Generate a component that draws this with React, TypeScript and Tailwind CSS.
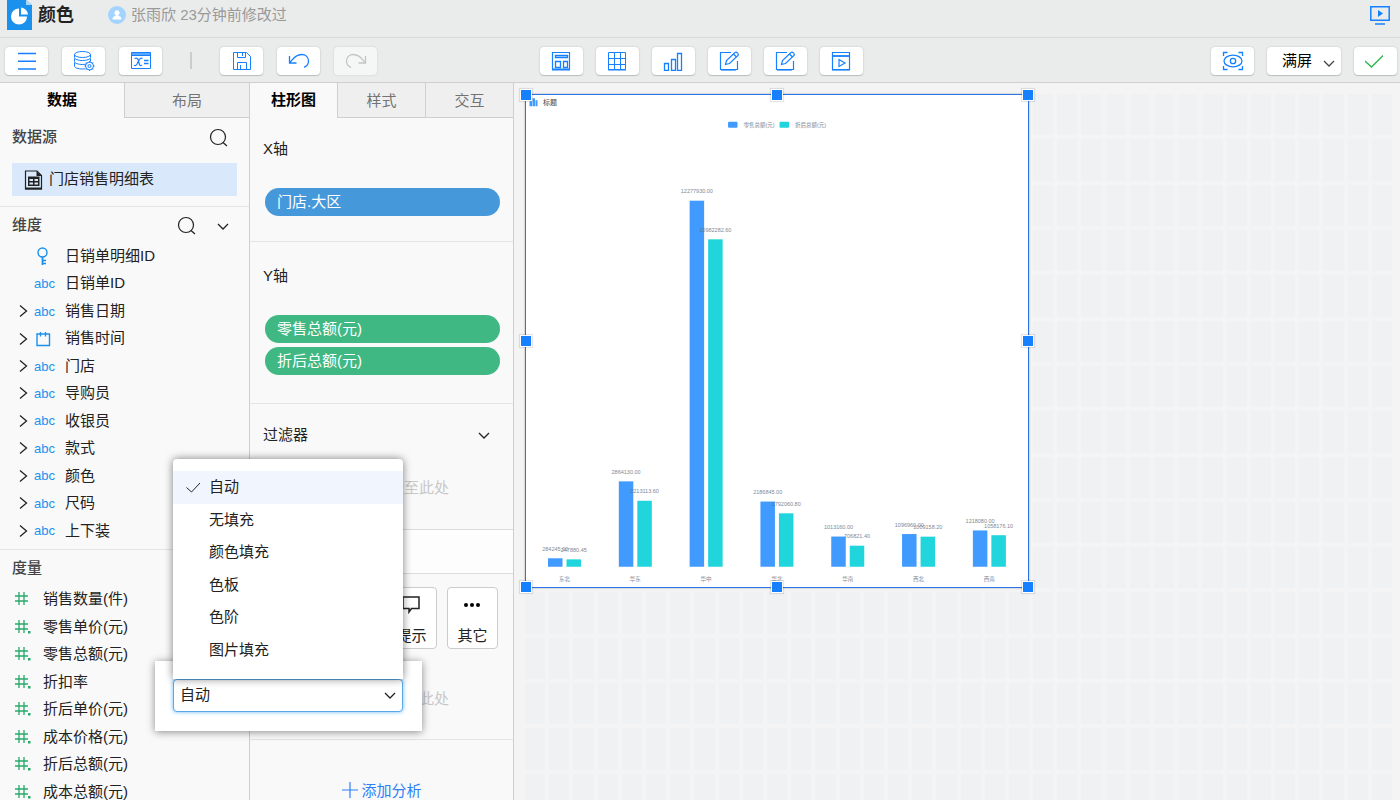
import type { ReactNode } from 'react'
import { useState } from 'react'

type FieldKind = 'key' | 'text' | 'date'

const dimensions: { name: string; kind: FieldKind; expandable: boolean }[] = [
  { name: '日销单明细ID', kind: 'key', expandable: false },
  { name: '日销单ID', kind: 'text', expandable: false },
  { name: '销售日期', kind: 'text', expandable: true },
  { name: '销售时间', kind: 'date', expandable: true },
  { name: '门店', kind: 'text', expandable: true },
  { name: '导购员', kind: 'text', expandable: true },
  { name: '收银员', kind: 'text', expandable: true },
  { name: '款式', kind: 'text', expandable: true },
  { name: '颜色', kind: 'text', expandable: true },
  { name: '尺码', kind: 'text', expandable: true },
  { name: '上下装', kind: 'text', expandable: true },
]

const measures = [
  { name: '销售数量(件)', decimal: false },
  { name: '零售单价(元)', decimal: true },
  { name: '零售总额(元)', decimal: true },
  { name: '折扣率', decimal: true },
  { name: '折后单价(元)', decimal: true },
  { name: '成本价格(元)', decimal: true },
  { name: '折后总额(元)', decimal: true },
  { name: '成本总额(元)', decimal: true },
]

const fillOptions = ['自动', '无填充', '颜色填充', '色板', '色阶', '图片填充']

const regions = [
  { name: '东北', retail: 284245, discounted: 247880.45 },
  { name: '华东', retail: 2864130, discounted: 2213113.6 },
  { name: '华中', retail: 12277930, discounted: 10982282.6 },
  { name: '华北', retail: 2186845, discounted: 1792060.8 },
  { name: '华南', retail: 1013160, discounted: 706821.4 },
  { name: '西北', retail: 1096960, discounted: 1009158.2 },
  { name: '西南', retail: 1218080, discounted: 1058176.1 },
]

/* ---------- icons ---------- */

function Icon({ size = 20, sw = 1, className, children }: { size?: number; sw?: number; className?: string; children: ReactNode }) {
  return (
    <svg
      width={size}
      height={size}
      viewBox={`0 0 ${size} ${size}`}
      fill="none"
      stroke="currentColor"
      strokeWidth={sw}
      className={className}
      aria-hidden="true"
    >
      {children}
    </svg>
  )
}

const MenuIcon = () => (
  <Icon sw={1.4}>
    <path d="M1 2.500h18M1 10.300h18M1 18h18" />
  </Icon>
)

const DatabaseIcon = () => (
  <Icon size={22}>
    <ellipse cx="9.500" cy="4.500" rx="8" ry="3" />
    <path d="M1.500 4.500v3c0 1.700 3.600 3 8 3s8-1.300 8-3v-3M1.500 8.500v3c0 1.700 3.600 3 8 3 1.200 0 2.300-.1 3.300-.3M17.500 8.500v3M1.500 12.500v3.500c0 1.700 3.600 3 8 3 1 0 2-.1 2.800-.2" />
    <circle cx="16.500" cy="16" r="4" />
    <circle cx="16.500" cy="16" r="1.500" />
    <path d="M16.500 11v1.500M16.500 19.500V21M11.500 16H13M20 16h1.500M13 12.500l1 1M19 18.500l1 1M20 12.500l-1 1M14 18.500l-1 1" />
  </Icon>
)

const FormulaIcon = () => (
  <Icon size={22}>
    <path d="M1.500 2.500h19v16h-19z M1.500 5.500h19" />
    <path d="M1.500 4h19" strokeWidth="2" opacity=".7" />
    <path d="M4.500 8.500c2.500-1 3.500 0 4 2.500l.8 3c.4 1.800 1.200 2 2.700 1M12.500 8.500c-2-1-3 .5-4 2.500l-1.500 3c-.8 1.500-1.600 2-3 1.200" strokeWidth="1.200" />
    <path d="M14 10.500h4.500M14 13.500h4.500" strokeWidth="1.500" />
  </Icon>
)

const SaveIcon = () => (
  <Icon>
    <path d="M1.500 1.500h13l4 4v13h-17z M5.500 1.500v5h8v-5 M5.500 18.500v-7h9v7 M8.500 14v4.500 M10.500 2v3" />
  </Icon>
)

const UndoIcon = ({ flip = false }: { flip?: boolean }) => (
  <Icon size={22} sw={1.3} className={flip ? '-scale-x-100' : ''}>
    <path d="M1.500 6v7h7M1.500 13c2.500-2.500 5-8.500 12-8.500 4.500 0 7 3 7 6.500 0 3.200-2 5.300-4.500 6.300" />
  </Icon>
)

const LayoutIcon = () => (
  <Icon>
    <path d="M1.500 1.500h17v17h-17z" strokeWidth="1.200" />
    <path d="M1 18.500h18" strokeWidth="2" />
    <path d="M4.500 4.500h12v2h-12z M4.500 10.500h5v6h-5z M12.500 10.500h4v6h-4z" strokeWidth="1.300" />
  </Icon>
)

const TableIcon = () => (
  <Icon>
    <path d="M1.500 1.500h17v17h-17z M7.500 1.500v17 M13.500 1.500v17 M1.500 7.500h17 M1.500 13.500h17" />
    <path d="M1 19h18" />
  </Icon>
)

const BarsIcon = () => (
  <Icon sw={1.3}>
    <path d="M1.500 12.500h4v7h-4z M8.500 8.500h4v11h-4z M14.500 2.500h4v17h-4z" />
  </Icon>
)

const EditIcon = () => (
  <Icon sw={1.2}>
    <path d="M12 1.500H1.500v17h17V10" />
    <path d="M2 19h15" />
    <path d="M6.500 13.500l1-4 8.500-8c1.500-1 4 1 3 3l-8.500 8z M14.500 3l3 3" />
  </Icon>
)

const MediaIcon = () => (
  <Icon sw={1.2}>
    <path d="M1.500 1.500h17v17h-17z" />
    <path d="M1 5h18" strokeWidth="1.800" />
    <path d="M1 19h18" />
    <path d="M8 8.500l6 3.500-6 3.500z" />
  </Icon>
)

const PreviewIcon = () => (
  <Icon size={22} sw={1.3}>
    <path d="M1.500 6V2.500H5.500M16.500 2.500h4V6M20.500 16v3.500h-4M5.500 19.500h-4V16" />
    <ellipse cx="11" cy="11" rx="9" ry="5.800" />
    <circle cx="11" cy="11" r="2.700" />
  </Icon>
)

const PresentIcon = () => (
  <Icon size={22} className="text-[#1680ff]">
    <path d="M1.800 2.800h18.400v13.400H1.800z" strokeWidth="1.500" />
    <path d="M6 20h10" strokeWidth="1.500" />
    <path d="M9 6l5 3.500L9 13z" fill="currentColor" stroke="none" />
  </Icon>
)

const SearchIcon = () => (
  <Icon sw={1.2} className="text-[#222]">
    <circle cx="9" cy="9" r="7.500" />
    <path d="M14 14.500l4 3.500" />
  </Icon>
)

const ChevronIcon = ({ className = '' }: { className?: string }) => (
  <Icon size={12} sw={1.3} className={className}>
    <path d="M1 4l5 5 5-5" />
  </Icon>
)

const ExpandIcon = () => (
  <Icon size={14} sw={1.3}>
    <path d="M3 1.500l6.500 5.500L3 12.500" />
  </Icon>
)

function FieldIcon({ kind }: { kind: FieldKind }) {
  if (kind === 'text') return <span className="text-[13px] leading-none">abc</span>
  if (kind === 'key') {
    return (
      <Icon size={18} sw={1.4}>
        <circle cx="8.500" cy="5.500" r="4.500" />
        <path d="M8.500 10v8" strokeWidth="1.800" />
        <path d="M9 13.500h3M9 16.500h3" strokeWidth="1.400" />
      </Icon>
    )
  }
  return (
    <Icon size={18} sw={1.4}>
      <path d="M3 4h12.500v11.500h-12.500z M6.500 2v4.500M11.500 2v4.500" />
    </Icon>
  )
}

/* ---------- small parts ---------- */

function ToolButton({ label, disabled, children }: { label: string; disabled?: boolean; children: ReactNode }) {
  return (
    <button
      type="button"
      aria-label={label}
      disabled={disabled}
      className="flex h-7 w-[43px] items-center justify-center rounded bg-white text-[#1680ff] shadow-[0_0_2px_rgba(0,0,0,0.2),0_1px_1px_rgba(0,0,0,0.15)] disabled:bg-[#f5f6f6] disabled:text-[#c4c4c4] disabled:shadow-[0_0_2px_rgba(0,0,0,0.15)]"
    >
      {children}
    </button>
  )
}

function Tabs({ items }: { items: string[] }) {
  return (
    <div role="tablist" className="flex h-[35px]">
      {items.map((item, i) => (
        <button
          key={item}
          type="button"
          role="tab"
          aria-selected={i === 0}
          className={
            i === 0
              ? 'flex-1 font-bold text-black'
              : 'flex-1 border-b border-l border-[#cfcfcf] bg-[#efefef] pt-0.5 text-[#737373]'
          }
        >
          {item}
        </button>
      ))}
    </div>
  )
}

const Pill = ({ className, children }: { className: string; children: ReactNode }) => (
  <div className={`flex h-7 items-center rounded-full px-3 text-white ${className}`}>{children}</div>
)

const Handle = ({ className }: { className: string }) => (
  <span className={`absolute size-3 border border-white bg-[#1680ff] shadow-[0_0_1px_1px_rgba(0,0,0,0.1)] ${className}`} />
)

/* ---------- chart ---------- */

const BASE = 943
const MAX_HEIGHT = 732
const MAX_VALUE = 12277930

function BarChart() {
  const series = [
    { key: 'retail' as const, label: '零售总额(元)', color: '#419bff', x: 404 },
    { key: 'discounted' as const, label: '折后总额(元)', color: '#20d5dc', x: 507 },
  ]
  return (
    <svg viewBox="0 0 1004 984" className="block h-full w-full" fontSize="11" fill="#5f6b7a">
      <path d="M7 12h5v10H7z M13 6h5v16h-5z M19 10h4v12h-4z" fill="#419bff" />
      <text x="34" y="20" fontSize="14" fill="#444">标题</text>
      {series.map((s, n) => (
        <g key={s.key}>
          <rect x={s.x} y="53" width="19" height="12" rx="2" fill={s.color} />
          <text x={s.x + 31} y="63" opacity=".8">{s.label}</text>
          {regions.map((r, i) => {
            const h = (r[s.key] / MAX_VALUE) * MAX_HEIGHT
            const x = 44 + i * 141.6 + n * 37
            return <rect key={r.name} x={x} y={BASE - h} width="29" height={h} fill={s.color} />
          })}
        </g>
      ))}
      {regions.map((r, i) => (
        <g key={r.name} textAnchor="middle" opacity=".8">
          {series.map((s, n) => (
            <text key={s.key} x={58.5 + i * 141.6 + n * 37} y={BASE - (r[s.key] / MAX_VALUE) * MAX_HEIGHT - 15}>
              {r[s.key].toFixed(2)}
            </text>
          ))}
          <text x={77 + i * 141.6} y="972">{r.name}</text>
        </g>
      ))}
    </svg>
  )
}

/* ---------- page ---------- */

function Header() {
  return (
    <header className="flex h-[38px] shrink-0 items-start justify-between border-b border-[#d9dbdb] pr-[9px] pl-[7px]">
      <div className="flex items-start">
        <svg width="25" height="30" viewBox="0 0 25 30" aria-hidden="true">
          <path d="M0 0h19l6 5v25H0z" fill="#1b91ee" />
          <path d="M19 0v5h6z" fill="#a9d8fb" />
          <path d="M12 8.500v8h8a8 8 0 1 1-8-8z" fill="#fff" />
          <path d="M14 7.500a7.500 7.500 0 0 1 7 7h-7z" fill="#fff" />
        </svg>
        <h1 className="ml-1.5 h-[30px] text-lg leading-[30px] font-bold text-[#222]">颜色</h1>
        <svg width="18" height="18" viewBox="0 0 18 18" className="mt-1.5 ml-[34px]" aria-hidden="true">
          <circle cx="9" cy="9" r="9" fill="#a3d4ff" />
          <path d="M9 4.300a2.600 2.600 0 0 1 1.400 4.800v1c1.500.4 3 .8 3 2.600v.8H4.600v-.8c0-1.800 1.500-2.200 3-2.600v-1A2.600 2.600 0 0 1 9 4.300z" fill="#fff" />
        </svg>
        <span className="ml-[5px] leading-[30px] text-[#999]">张雨欣 23分钟前修改过</span>
      </div>
      <button type="button" aria-label="播放" className="mt-1">
        <PresentIcon />
      </button>
    </header>
  )
}

function Toolbar() {
  return (
    <div className="grid h-[45px] shrink-0 grid-cols-[1fr_auto_1fr] items-center border-b border-[#cfcfcf] pt-px pr-[3px] pl-[5px]">
      <div className="flex items-center gap-3.5">
        <ToolButton label="菜单"><MenuIcon /></ToolButton>
        <ToolButton label="数据源"><DatabaseIcon /></ToolButton>
        <ToolButton label="公式"><FormulaIcon /></ToolButton>
        <span className="mx-3.5 h-[17px] w-0.5 bg-[#ccc]" />
        <ToolButton label="保存"><SaveIcon /></ToolButton>
        <ToolButton label="撤销"><UndoIcon /></ToolButton>
        <ToolButton label="重做" disabled><UndoIcon flip /></ToolButton>
      </div>
      <div className="flex gap-[13px]">
        <ToolButton label="布局"><LayoutIcon /></ToolButton>
        <ToolButton label="表格"><TableIcon /></ToolButton>
        <ToolButton label="图表"><BarsIcon /></ToolButton>
        <ToolButton label="文本"><EditIcon /></ToolButton>
        <ToolButton label="填报"><EditIcon /></ToolButton>
        <ToolButton label="媒体"><MediaIcon /></ToolButton>
      </div>
      <div className="flex justify-end gap-[13px]">
        <ToolButton label="预览"><PreviewIcon /></ToolButton>
        <div className="relative">
          <select
            aria-label="缩放"
            className="h-7 w-[74px] appearance-none rounded bg-white pt-0.5 pl-[15px] text-black shadow-[0_0_2px_rgba(0,0,0,0.2),0_1px_1px_rgba(0,0,0,0.15)]"
          >
            <option>满屏</option>
          </select>
          <ChevronIcon className="pointer-events-none absolute top-2.5 right-1.5 text-[#444]" />
        </div>
        <button
          type="button"
          aria-label="完成"
          className="flex h-7 w-[43px] items-center justify-center rounded bg-white pr-1 text-[#2db84d] shadow-[0_0_2px_rgba(0,0,0,0.2),0_1px_1px_rgba(0,0,0,0.15)]"
        >
          <Icon size={18} sw={1.3}><path d="M0 9l6.500 6L18 3.500" /></Icon>
        </button>
      </div>
    </div>
  )
}

function DataPanel() {
  return (
    <aside className="w-[250px] shrink-0 overflow-hidden border-r border-[#cfcfcf] bg-[#f9f9f9]">
      <Tabs items={['数据', '布局']} />
      <section className="border-b border-[#e4e4e4] px-3 pb-2.5">
        <div className="flex h-[37px] items-center justify-between pt-0.5 pr-2">
          <h2 className="font-medium text-[#444]">数据源</h2>
          <button type="button" aria-label="搜索数据源"><SearchIcon /></button>
        </div>
        <div className="mt-2 flex h-[33px] items-center bg-[#d9e9fb] pl-3 text-[#222]">
          <svg width="19" height="20" viewBox="0 0 19 20" className="mr-1.5" aria-hidden="true">
            <path d="M1.500 1v18h16V5.500L13 1z" fill="none" stroke="#222" strokeWidth="1.200" />
            <path d="M12.500 1l5 5h-5z" fill="#222" />
            <path d="M1 18.500h17" stroke="#222" strokeWidth="2" />
            <path d="M4 6.500h11.500v9.500H4z" fill="#222" />
            <path d="M5.500 9h3.500v2H5.500z M10.500 9H14v2h-3.500z M5.500 12.500h3.500v2H5.500z M10.500 12.500H14v2h-3.500z" fill="#d9e9fb" />
          </svg>
          门店销售明细表
        </div>
      </section>

      <section className="border-b border-[#e4e4e4] pb-[5px]">
        <div className="flex h-[35px] items-center pt-0.5 pr-5 pl-3">
          <h2 className="mr-auto font-medium text-[#444]">维度</h2>
          <button type="button" aria-label="搜索维度" className="mr-5"><SearchIcon /></button>
          <button type="button" aria-label="收起维度"><ChevronIcon className="text-[#222]" /></button>
        </div>
        <ul className="grid h-[302px] auto-rows-fr text-[#222]">
          {dimensions.map((field) => (
            <li key={field.name} className="flex items-center pt-px pl-[17px]">
              <span className="w-[17px]">
                {field.expandable && <ExpandIcon />}
              </span>
              <span className="flex w-[31px] text-[#1b91ee]">
                <FieldIcon kind={field.kind} />
              </span>
              {field.name}
            </li>
          ))}
        </ul>
      </section>

      <section>
        <h2 className="flex h-[35px] items-center px-3 pt-0.5 font-medium text-[#444]">度量</h2>
        <ul className="grid h-[220px] auto-rows-fr text-[#222]">
          {measures.map((m) => (
            <li key={m.name} className="flex items-center pt-px pl-3.5">
              <Icon size={18} sw={1.3} className="mr-[11px] text-[#28a96c]">
                <path d="M1 6h13M1 11h13M5 2v13M10 2v13" />
                {m.decimal && <path d="M14 13h2.500v2.500h-2.500z" fill="currentColor" stroke="none" />}
              </Icon>
              {m.name}
            </li>
          ))}
        </ul>
      </section>
    </aside>
  )
}

function ConfigPanel() {
  return (
    <aside className="w-[264px] shrink-0 overflow-hidden border-r border-[#cfcfcf] bg-[#f9f9f9] text-[#222]">
      <Tabs items={['柱形图', '样式', '交互']} />
      <section className="border-b border-[#e4e4e4] px-[13px] pt-[21px] pb-[25px]">
        <h3 className="leading-5">X轴</h3>
        <Pill className="mt-[29px] ml-0.5 bg-[#4599db]">门店.大区</Pill>
      </section>
      <section className="border-b border-[#e4e4e4] px-[13px] pt-6 pb-7">
        <h3 className="leading-5">Y轴</h3>
        <div className="mt-[29px] ml-0.5 flex flex-col gap-1">
          <Pill className="bg-[#3fb883]">零售总额(元)</Pill>
          <Pill className="bg-[#3fb883]">折后总额(元)</Pill>
        </div>
      </section>
      <section className="border-b border-[#dcdcdc] px-[13px] pt-5 pb-[31px]">
        <div className="flex h-[22px] items-center justify-between pr-2.5">
          <h3>过滤器</h3>
          <button type="button" aria-label="收起过滤器"><ChevronIcon /></button>
        </div>
        <p className="mt-8 text-center leading-5 text-[#c8c8c8]">拖拽左侧字段至此处</p>
      </section>
      <div className="h-11 border-b border-[#dcdcdc] bg-[#fdfdfd]" />
      <section className="border-b border-[#e4e4e4] pt-[13px] pb-[30px]">
        <div className="flex justify-end gap-2.5 pr-[15px]">
          <button type="button" className="flex h-[62px] w-[51px] flex-col items-center rounded-sm border border-[#ccc] bg-white pt-1.5">
            <Icon size={20} sw={1.5}><path d="M1 3h16v11.500h-7.500L7 18v-3.500H1z" /></Icon>
            <span className="mt-2.5 leading-6">提示</span>
          </button>
          <button type="button" className="flex h-[62px] w-[51px] flex-col items-center rounded-sm border border-[#ccc] bg-white pt-1.5">
            <svg width="20" height="20" viewBox="0 0 20 20" fill="#000" aria-hidden="true">
              <circle cx="3" cy="11" r="2" />
              <circle cx="9" cy="11" r="2" />
              <circle cx="15" cy="11" r="2" />
            </svg>
            <span className="mt-2.5 leading-6">其它</span>
          </button>
        </div>
        <p className="mt-10 text-center leading-5 text-[#c8c8c8]">拖拽左侧字段至此处</p>
      </section>
      <button type="button" className="mx-auto mt-10 flex items-center gap-0.5 text-[#2f7ff8]">
        <Icon size={18} sw={1.2}><path d="M9 0v16M1 8h16" /></Icon>
        添加分析
      </button>
    </aside>
  )
}

function Canvas() {
  return (
    <main className="min-w-0 flex-1 overflow-hidden bg-[#f4f4f4] pt-[11px] pr-2 pl-[11px]">
      <div className="grid h-[721px] grid-cols-36 grid-rows-16 gap-1">
        <div className="relative col-span-21 row-span-11 min-h-0 border border-[#2a72e8] bg-white shadow-[0_0_2px_rgba(0,0,0,0.3)]">
          <div className="h-full w-full overflow-hidden">
            <BarChart />
          </div>
          <Handle className="-top-1.5 -left-1.5" />
          <Handle className="-top-1.5 left-1/2 -translate-x-1/2" />
          <Handle className="-top-1.5 -right-1.5" />
          <Handle className="top-1/2 -left-1.5 -translate-y-1/2" />
          <Handle className="top-1/2 -right-1.5 -translate-y-1/2" />
          <Handle className="-bottom-1.5 -left-1.5" />
          <Handle className="-bottom-1.5 left-1/2 -translate-x-1/2" />
          <Handle className="-right-1.5 -bottom-1.5" />
        </div>
        {Array.from({ length: 345 }, (_, i) => (
          <div key={i} className="min-h-0 bg-[#f0f1f3]" />
        ))}
      </div>
    </main>
  )
}

function FillPopup() {
  const [fill, setFill] = useState('自动')
  return (
    <div className="absolute top-[578px] left-[155px] w-[267px] bg-white pt-[18px] pr-[19px] pb-[19px] pl-[18px] shadow-[0_1px_8px_rgba(0,0,0,0.45)]">
      <div className="relative">
        <select
          aria-label="填充方式"
          value={fill}
          onChange={(e) => setFill(e.target.value)}
          className="block h-[33px] w-full appearance-none rounded-sm border border-[#5aa9e6] bg-white px-1.5 text-[#222] shadow-[0_0_4px_#6bb8f5]"
        >
          {fillOptions.map((option) => (
            <option key={option}>{option}</option>
          ))}
        </select>
        <ChevronIcon className="pointer-events-none absolute top-2.5 right-[7px] text-[#222]" />
        <ul
          role="listbox"
          className="absolute bottom-full left-0 grid h-[220px] w-full auto-rows-fr rounded-t bg-white pt-3 pb-[13px] text-[#222] shadow-[0_0_8px_rgba(0,0,0,0.5)]"
        >
          {fillOptions.map((option) => (
            <li key={option} role="option" aria-selected={option === fill} className="grid">
              <button
                type="button"
                onClick={() => setFill(option)}
                className={option === fill ? 'flex items-center bg-[#f1f6fe] pl-3' : 'flex items-center pl-3'}
              >
                <span className="w-6">
                  {option === fill && (
                    <Icon size={16} className="text-[#222]"><path d="M1.500 8.500l5 4.500L15 4" /></Icon>
                  )}
                </span>
                {option}
              </button>
            </li>
          ))}
        </ul>
      </div>
    </div>
  )
}

export default function App() {
  return (
    <div className="flex h-screen flex-col overflow-hidden bg-[#eaeceb] font-['Liberation_Sans','Noto_Sans_CJK_SC',sans-serif] text-[15px]">
      <Header />
      <Toolbar />
      <div className="relative flex min-h-0 flex-1">
        <DataPanel />
        <ConfigPanel />
        <Canvas />
        <FillPopup />
      </div>
    </div>
  )
}
